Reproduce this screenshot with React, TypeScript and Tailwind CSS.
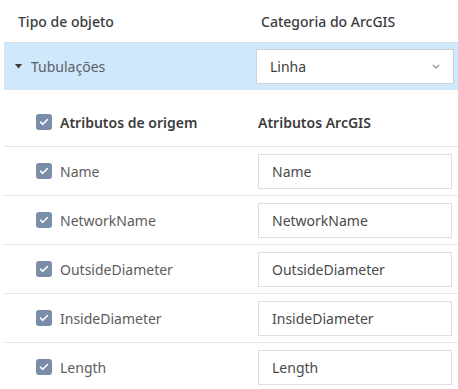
import React from "react";

const rows = ["Name", "NetworkName", "OutsideDiameter", "InsideDiameter", "Length"];

function Check() {
  return (
    <div className="w-[16px] h-[16px] rounded-[3px] bg-[#7a8da8] flex items-center justify-center shrink-0">
      <svg width="10" height="8" viewBox="0 0 10 8" fill="none">
        <path d="M1.5 4.2 L3.8 6.3 L8.5 1.5" stroke="white" strokeWidth="1.6" strokeLinecap="round" strokeLinejoin="round" />
      </svg>
    </div>
  );
}

export default function App() {
  return (
    <div
      className="w-[458px] h-[389px] bg-white overflow-hidden pl-[4px] text-[14px]"
      style={{ fontFamily: '"Noto Sans", sans-serif' }}
    >
      <div className="grid grid-cols-[252px_1fr] h-[42px] items-center text-[#3c3c3c] font-medium">
        <div className="pl-[14px]">Tipo de objeto</div>
        <div className="pl-[5px]">Categoria do ArcGIS</div>
      </div>
      <div className="grid grid-cols-[252px_1fr] h-[48px] items-center bg-[#cfe8fb] border-t border-[#d6dde3]">
        <div className="flex items-center pl-[11px] text-[#5a5f66]">
          <svg width="7" height="5" viewBox="0 0 7 5" className="mr-[9px]">
            <path d="M0 0 L7 0 L3.5 4.5 Z" fill="#3c3c3c" />
          </svg>
          Tubulações
        </div>
        <div className="pr-[4px]">
          <div className="h-[35px] bg-white border border-[#c9d3db] flex items-center justify-between pl-[13px] pr-[13px] text-[#3c3c3c]">
            <span>Linha</span>
            <svg width="8" height="5" viewBox="0 0 8 5" fill="none">
              <path d="M0.8 0.8 L4 4 L7.2 0.8" stroke="#888" strokeWidth="1.2" />
            </svg>
          </div>
        </div>
      </div>
      <div className="grid grid-cols-[252px_1fr] h-[57px] pt-[8px] items-center border-b border-[#e3e3e3] font-semibold text-[#3c3c3c]">
        <div className="flex items-center pl-[32px] gap-[8px]">
          <Check />
          <span>Atributos de origem</span>
        </div>
        <div className="pl-[2px]">Atributos ArcGIS</div>
      </div>
      {rows.map((r) => (
        <div key={r} className="grid grid-cols-[252px_1fr] h-[49px] items-center border-b border-[#e6e6e6]">
          <div className="flex items-center pl-[32px] gap-[8px] text-[#5c5c5c]">
            <Check />
            <span>{r}</span>
          </div>
          <div className="pl-[2px] pr-[6px]">
            <div className="h-[35px] border border-[#dedede] flex items-center pl-[13px] text-[#4a4a4a]">{r}</div>
          </div>
        </div>
      ))}
    </div>
  );
}
